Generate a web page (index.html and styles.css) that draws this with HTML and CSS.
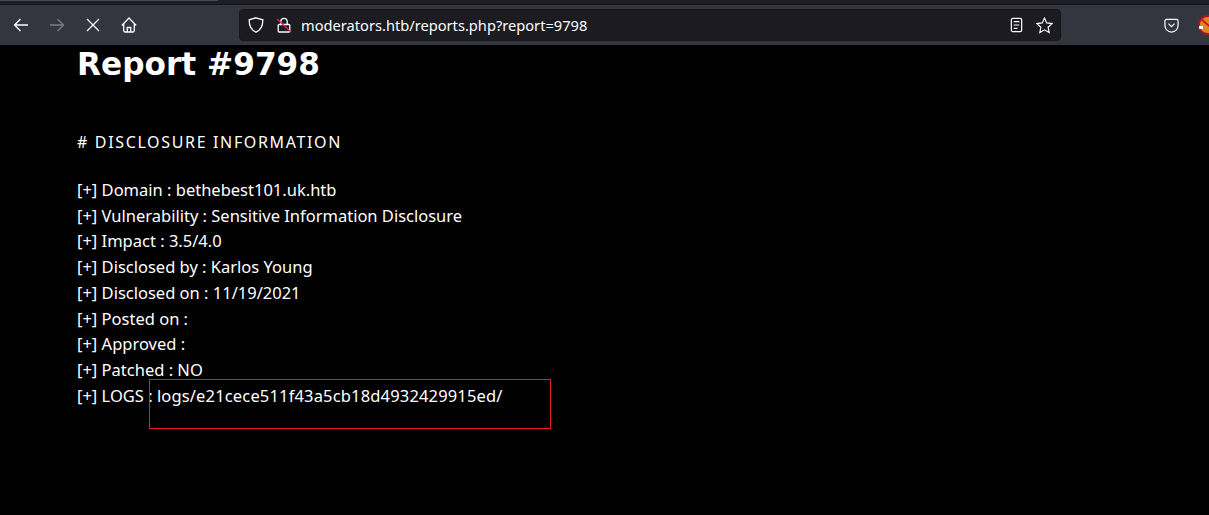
FILE: index.html
```html
<!DOCTYPE html>
<html lang="en">
<head>
<meta charset="utf-8">
<title>Report #9798</title>
<link rel="stylesheet" href="styles.css">
</head>
<body>
<header class="chrome">
  <div class="tabstrip"><div class="tab-edge"></div></div>
  <div class="toolbar">
    <nav class="nav">
      <svg class="ico" viewBox="0 0 16 16"><path d="M15 8H1.500M7.500 2 1.500 8l6 6"/></svg>
      <svg class="ico dim" viewBox="0 0 16 16"><path d="M1 8h13.500M8.500 2l6 6-6 6"/></svg>
      <svg class="ico" viewBox="0 0 16 16"><path d="M2 2l12 12M14 2 2 14"/></svg>
      <svg class="ico" viewBox="0 0 16 16"><path d="M.8 8.500 8 1l7.200 7.500M2.700 6.500V13.500a1.500 1.500 0 0 0 1.500 1.500h7.600a1.500 1.500 0 0 0 1.500-1.500V6.500M6.300 15v-4.500h3.400V15"/></svg>
    </nav>
    <div class="urlbar">
      <svg class="shield" viewBox="0 0 16 16"><path d="M8 .8 14.800 2.800c.2 6-1.500 10-6.800 12.400C2.700 12.800 1 8.800 1.200 2.800z"/></svg>
      <svg class="lock" viewBox="0 0 16 16"><path d="M4.800 7.500V4.500a3.200 3.200 0 0 1 6.400 0V7.500M3.200 7.500h9.600a1 1 0 0 1 1 1V14a1 1 0 0 1-1 1H3.200a1 1 0 0 1-1-1V8.500a1 1 0 0 1 1-1z"/><path class="slash" d="M1 2l14 13"/></svg>
      <span class="url">moderators.htb/reports.php?report=9798</span>
      <svg class="reader" viewBox="0 0 16 16"><path d="M4 1h8a1.500 1.500 0 0 1 1.500 1.500v11A1.500 1.500 0 0 1 12 15H4a1.500 1.500 0 0 1-1.500-1.500v-11A1.500 1.500 0 0 1 4 1zM5 4.500h6M5 8h6M5 11.500h4"/></svg>
      <svg class="star" viewBox="0 0 16 16"><path d="M8 1l2.100 4.600 5 .6-3.700 3.400 1 5L8 12.100l-4.400 2.500 1-4.900L.9 6.200l5-.6z"/></svg>
    </div>
    <svg class="pocket" viewBox="0 0 16 16"><path d="M2.500 1.500h11A1.500 1.500 0 0 1 15 3v5A7 7 0 0 1 1 8V3a1.500 1.500 0 0 1 1.500-1.500zM4.800 6 8 9.200 11.200 6"/></svg>
    <svg class="addon" viewBox="0 0 20 20"><circle class="addon-disc" cx="10" cy="10" r="9"/><path class="addon-bar" d="M3 4l14 12"/><rect class="addon-tip" x="1" y="11" width="4" height="3"/></svg>
  </div>
</header>
<main class="page">
  <h1 class="title">Report #9798</h1>
  <h2 class="section"># DISCLOSURE INFORMATION</h2>
  <ul class="facts">
    <li>[+] Domain : bethebest101.uk.htb</li>
    <li>[+] Vulnerability : Sensitive Information Disclosure</li>
    <li>[+] Impact : 3.5/4.0</li>
    <li>[+] Disclosed by : Karlos Young</li>
    <li>[+] Disclosed on : 11/19/2021</li>
    <li>[+] Posted on :</li>
    <li>[+] Approved :</li>
    <li>[+] Patched : NO</li>
    <li class="logs">[+] LOGS : <span class="path">logs/e21cece511f43a5cb18d4932429915ed/</span><span class="mark"></span></li>
  </ul>
</main>
</body>
</html>
```
FILE: styles.css
```css
* { box-sizing: border-box; }
html, body { margin: 0; padding: 0; }
body { width: 1209px; height: 515px; background: #000; color: #fff; overflow: hidden; font-family: "Noto Sans", sans-serif; }
.chrome { height: 45px; display: flex; flex-direction: column; background: #33363f; }
.tabstrip { height: 5px; background: #1e1e27; border-bottom: 1px solid #14141a; }
.tab-edge { width: 218px; height: 1px; background: #4a4a52; }
.toolbar { flex: 1; display: flex; align-items: center; padding: 0 0 0 13px; overflow: hidden; }
.nav { display: flex; gap: 20px; width: 226px; flex: none; }
svg { fill: none; stroke: #fbfbfe; stroke-width: 1.300; flex: none; }
.ico { width: 16px; height: 16px; }
.dim { stroke: #7c7d83; }
.urlbar { width: 822px; height: 32px; flex: none; display: flex; align-items: center; background: #1c1b22; border: 1px solid #15151a; border-radius: 4px; padding-left: 8px; }
.shield { width: 16px; height: 16px; }
.lock { width: 16px; height: 16px; margin-left: 12px; }
.slash { stroke: #e22850; stroke-width: 1.100; }
.url { margin-left: 9px; font-size: 14.650px; color: #fbfbfe; flex: 1; }
.reader { width: 15px; height: 16px; }
.star { width: 17px; height: 17px; margin-left: 12px; margin-right: 7px; stroke-width: 1.100; }
.pocket { width: 15px; height: 15px; margin-left: 103px; }
.addon { width: 20px; height: 20px; margin-left: 19px; }
.addon-disc { fill: #e0871c; stroke: #b5121f; stroke-width: 1.800; }
.addon-bar { stroke: #c8102e; stroke-width: 1.800; }
.addon-tip { fill: #fff; stroke: none; }
.page { padding: 0 0 0 77px; }
.title { margin: 0; font: 700 31.200px/38px "DejaVu Sans", sans-serif; }
.section { margin: 48px 0 0; font-size: 16px; line-height: 22px; font-weight: 400; letter-spacing: 1.650px; }
.facts { list-style: none; margin: 24px 0 0; padding: 0; font-size: 16.500px; line-height: 25.700px; }
.logs { position: relative; }
.path { letter-spacing: .16px; }
.mark { position: absolute; left: 72px; top: -4px; width: 402px; height: 50px; border: 1px solid #ec1c24; }
```
